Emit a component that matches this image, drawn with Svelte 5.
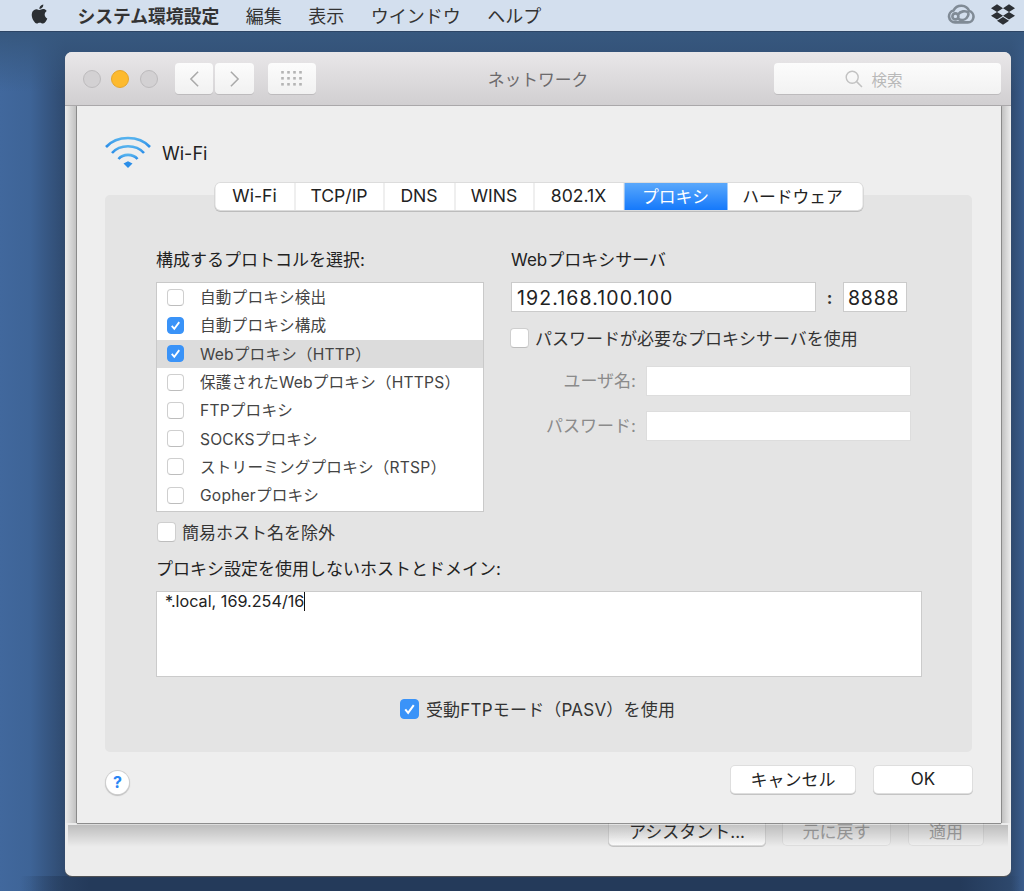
<script>
  const menus = ['編集', '表示', 'ウインドウ', 'ヘルプ'];
  const tabs = [
    { name: 'Wi-Fi', w: 80, latin: true },
    { name: 'TCP/IP', w: 89, latin: true },
    { name: 'DNS', w: 71, latin: true },
    { name: 'WINS', w: 79, latin: true },
    { name: '802.1X', w: 90, latin: true },
    { name: 'プロキシ', w: 103, active: true },
    { name: 'ハードウェア', w: 135 }
  ];
  const protocols = [
    { name: '自動プロキシ検出', on: false },
    { name: '自動プロキシ構成', on: true },
    { name: 'Webプロキシ\uFF08HTTP\uFF09', on: true, selected: true },
    { name: '保護されたWebプロキシ\uFF08HTTPS\uFF09', on: false },
    { name: 'FTPプロキシ', on: false },
    { name: 'SOCKSプロキシ', on: false },
    { name: 'ストリーミングプロキシ\uFF08RTSP\uFF09', on: false },
    { name: 'Gopherプロキシ', on: false }
  ];
  const pasvLabel = '受動FTPモード\uFF08PASV\uFF09を使用';
</script>

{#snippet box(on, cls)}
  <span class="box {cls} {on ? 'on' : ''}">
    {#if on}
      <svg viewBox="0 0 20 20" class="tick"><path d="M5 10.5l3.4 4L15 5.5" fill="none" stroke="#fff" stroke-width="2.4"/></svg>
    {/if}
  </span>
{/snippet}

<div class="desktop">
  <header class="menubar">
    <svg class="apple" viewBox="0 0 24 24"><path fill="#2b2f33" d="M12.152 6.896c-.948 0-2.415-1.078-3.96-1.04-2.04.027-3.91 1.183-4.961 3.014-2.117 3.675-.546 9.103 1.519 12.09 1.013 1.454 2.208 3.09 3.792 3.039 1.52-.065 2.09-.987 3.935-.987 1.831 0 2.35.987 3.96.948 1.637-.026 2.676-1.48 3.676-2.948 1.156-1.688 1.636-3.325 1.662-3.415-.039-.013-3.182-1.221-3.22-4.857-.026-3.04 2.48-4.494 2.597-4.559-1.429-2.09-3.623-2.324-4.39-2.376-2-.156-3.675 1.09-4.61 1.09zM15.53 3.83c.843-1.012 1.4-2.427 1.245-3.83-1.207.052-2.662.805-3.532 1.818-.78.896-1.454 2.338-1.273 3.714 1.338.104 2.715-.688 3.559-1.701"/></svg>
    <strong class="appname">システム環境設定</strong>
    {#each menus as m}<span class="menu">{m}</span>{/each}
    <span class="spacer"></span>
    <svg class="cc" viewBox="0 0 28 20" fill="none" stroke="#808b96" stroke-width="2.6">
      <path d="M8 18.4h12.8a5.8 5.8 0 0 0 1.4-11.4A8.6 8.6 0 0 0 6.6 6.4 6.1 6.1 0 0 0 8 18.4z"/>
      <circle cx="8.4" cy="12.4" r="3"/>
      <path d="M11 10.6c2-3.4 8-4.8 10.6-1.4M11 14.6c3 2 6.6 1.6 8.6-.6 1.4-1.6 2-3.4 2-4.8"/>
    </svg>
    <svg class="dropbox" viewBox="0 0 24 24"><path fill="#2c3035" d="M6 1.807L0 5.629l6 3.822 6.001-3.822L6 1.807zM18 1.807l-6 3.822 6 3.822 6-3.822-6-3.822zM0 13.274l6 3.822 6.001-3.822L6 9.452l-6 3.822zM18 9.452l-6 3.822 6 3.822 6-3.822-6-3.822zM6 18.371l6.001 3.822 6-3.822-6-3.822L6 18.371z"/></svg>
  </header>

  <section class="window">
    <div class="titlebar">
      <span class="light"></span>
      <span class="light yellow"></span>
      <span class="light"></span>
      <div class="navgroup">
        <span class="tbtn nav">
          <svg viewBox="0 0 12 20" class="chev"><path d="M10 2L2 10l8 8" fill="none" stroke="#a9a9a9" stroke-width="1.7"/></svg>
        </span>
        <span class="tbtn nav">
          <svg viewBox="0 0 12 20" class="chev"><path d="M2 2l8 8-8 8" fill="none" stroke="#a9a9a9" stroke-width="1.7"/></svg>
        </span>
      </div>
      <span class="tbtn gridbtn">
        <svg viewBox="0 0 21 15" class="dots">
          {#each [0, 1, 2] as r}
            {#each [0, 1, 2, 3] as c}
              <rect x={c * 6 + 0.2} y={r * 6} width="2.6" height="2.6" fill="#b4b4b4" />
            {/each}
          {/each}
        </svg>
      </span>
      <span class="wintitle">ネットワーク</span>
      <span class="search">
        <svg viewBox="0 0 18 18" class="glass"><circle cx="7.2" cy="7.2" r="6" fill="none" stroke="#c2c2c2" stroke-width="1.4"/><path d="M11.6 11.6l5.4 5.4" stroke="#c2c2c2" stroke-width="1.5"/></svg>
        <span>検索</span>
      </span>
    </div>
    <div class="winbody">
      <span class="wbtn primary">アシスタント...</span>
      <span class="wbtn revert">元に戻す</span>
      <span class="wbtn apply">適用</span>
    </div>

    <div class="sheet">
      <div class="sheethead">
        <svg class="wifi" viewBox="0 0 46 34" fill="none" stroke="url(#wf)" stroke-width="2.6">
          <defs>
            <linearGradient id="wf" x1="0" y1="0" x2="0" y2="1"><stop offset="0" stop-color="#55b2ee"/><stop offset="1" stop-color="#2a8de8"/></linearGradient>
          </defs>
          <path d="M1 12C12 0 34 0 45 12"/>
          <path d="M7 18C15 9 31 9 39 18"/>
          <path d="M13.5 24C18 18.5 28 18.5 32.5 24"/>
          <path d="M18.5 28.5l4.5-2.2 4.5 2.2-4.5 4.5z" fill="#2a8de8" stroke="none"/>
        </svg>
        <span class="wifiname">Wi-Fi</span>
      </div>

      <div class="panel">
        <nav class="tabs">
          {#each tabs as t}
            <span class="tab" class:active={t.active} class:latin={t.latin} style="width:{t.w}px">{t.name}</span>
          {/each}
        </nav>

        <div class="cols">
          <div class="left">
            <div class="label">構成するプロトコルを選択:</div>
            <ul class="list">
              {#each protocols as p}
                <li class:selected={p.selected}>
                  {@render box(p.on, 'small')}
                  <span class="rowtext">{p.name}</span>
                </li>
              {/each}
            </ul>
            <div class="checkrow exclude">
              {@render box(false, 'big')}
              <span>簡易ホスト名を除外</span>
            </div>
          </div>
          <div class="right">
            <div class="label">Webプロキシサーバ</div>
            <div class="hostrow">
              <span class="field host">192.168.100.100</span>
              <span class="colon">:</span>
              <span class="field port">8888</span>
            </div>
            <div class="checkrow pwcheck">
              {@render box(false, 'big')}
              <span>パスワードが必要なプロキシサーバを使用</span>
            </div>
            <div class="cred first">
              <span class="credlabel">ユーザ名:</span>
              <span class="field credfield"></span>
            </div>
            <div class="cred">
              <span class="credlabel">パスワード:</span>
              <span class="field credfield"></span>
            </div>
          </div>
        </div>

        <div class="label bypass">プロキシ設定を使用しないホストとドメイン:</div>
        <div class="textarea">*.local, 169.254/16<span class="caret"></span></div>
        <div class="checkrow pasv">
          {@render box(true, 'big')}
          <span>{pasvLabel}</span>
        </div>
      </div>

      <div class="foot">
        <span class="help">?</span>
        <span class="spacer"></span>
        <span class="fbtn cancel">キャンセル</span>
        <span class="fbtn ok">OK</span>
      </div>
    </div>
  </section>
</div>

<style>
  :global(body) {
    margin: 0;
  }
  .desktop {
    position: relative;
    width: 1024px;
    height: 891px;
    overflow: hidden;
    background:
      linear-gradient(90deg, rgba(36, 58, 90, 0) 20px, #243a5a 90px, #243a5a 960px, rgba(36, 58, 90, 0) 1020px) left bottom / 100% 15px no-repeat,
      linear-gradient(180deg, #37587f, rgba(55, 88, 127, 0)) left top 32px / 100% 60px no-repeat,
      linear-gradient(90deg, #41689d 0, #3e6497 30px, #2f4a6f 65px, #2f4a6f 1011px, #3a5c8c 1024px);
    font-family: Inter, "Noto Sans CJK JP", sans-serif;
    color: #222;
  }
  .menubar {
    display: flex;
    align-items: center;
    gap: 26.5px;
    height: 32px;
    box-sizing: border-box;
    padding: 0 9px 1px 30px;
    background: #d3dfee;
    border-bottom: 1px solid #2d4565;
    color: #333;
    font-size: 18px;
  }
  .apple {
    width: 19px;
    height: 22px;
    margin-right: 2px;
    margin-top: -3px;
  }
  .appname {
    font-weight: 700;
    font-size: 17.8px;
  }
  .spacer {
    flex: 1;
  }
  .cc {
    width: 28px;
    height: 20px;
    margin-right: -10px;
    margin-top: -2px;
  }
  .dropbox {
    width: 24px;
    height: 25px;
    margin-top: -1px;
  }
  .window {
    position: absolute;
    left: 65px;
    top: 52px;
    width: 946px;
    height: 824px;
    border-radius: 7px;
    background: #ececec;
    display: flex;
    flex-direction: column;
    box-shadow: 0 1px 1px #555;
  }
  .titlebar {
    display: flex;
    align-items: center;
    height: 54px;
    box-sizing: border-box;
    padding: 0 10px 0 18px;
    border-radius: 7px 7px 0 0;
    background: linear-gradient(#e9e7e9, #d1cfd1);
    border-bottom: 1px solid #aaa8aa;
    position: relative;
  }
  .light {
    width: 18px;
    height: 18px;
    box-sizing: border-box;
    border-radius: 50%;
    background: #d3d1d3;
    border: 1px solid #bdbbbd;
    margin-right: 10.3px;
    flex: none;
  }
  .light.yellow {
    background: #fdba2e;
    border-color: #e6a62a;
  }
  .navgroup {
    display: flex;
    gap: 2px;
    margin-left: 7px;
  }
  .tbtn {
    display: flex;
    align-items: center;
    justify-content: center;
    height: 31px;
    border-radius: 4px;
    background: linear-gradient(#fcfcfc, #f1f1f1);
    box-shadow: 0 1px 0 #bdbbbd;
  }
  .nav {
    width: 38.5px;
  }
  .chev {
    width: 11px;
    height: 18px;
  }
  .gridbtn {
    width: 48px;
    margin-left: 14px;
  }
  .dots {
    width: 21px;
    height: 15px;
  }
  .wintitle {
    position: absolute;
    left: 0;
    right: 0;
    padding-top: 1px;
    text-align: center;
    font-size: 16.8px;
    color: #6c6a6c;
    pointer-events: none;
  }
  .search {
    margin-left: auto;
    width: 227px;
    height: 31px;
    padding-right: 27px;
    box-sizing: border-box;
    display: flex;
    align-items: center;
    justify-content: center;
    gap: 8px;
    border-radius: 4px;
    background: linear-gradient(#fcfcfc, #f2f2f2);
    box-shadow: 0 1px 0 #bdbbbd;
    color: #b9b9b9;
    font-size: 15.5px;
  }
  .glass {
    width: 18px;
    height: 18px;
  }
  .winbody {
    flex: 1;
    display: flex;
    align-items: flex-end;
    padding: 0 28px 31px 0;
    justify-content: flex-end;
  }
  .wbtn {
    height: 27px;
    padding-bottom: 2px;
    display: flex;
    align-items: center;
    justify-content: center;
    border-radius: 4px;
    font-size: 17px;
    box-sizing: border-box;
  }
  .primary {
    width: 156px;
    margin-right: 18px;
    background: linear-gradient(#efefef, #fff);
    box-shadow: 0 0 0 1px #dcdcdc, 0 1px 0 1px #c4c4c4;
    color: #333;
  }
  .revert {
    width: 107px;
    margin-right: 19px;
    background: #f2f2f2;
    box-shadow: 0 0 0 1px #e0e0e0;
    color: #a8a8a8;
  }
  .apply {
    width: 74px;
    background: #f2f2f2;
    box-shadow: 0 0 0 1px #e0e0e0;
    color: #a8a8a8;
  }
  .sheet {
    position: absolute;
    left: 12px;
    top: 54px;
    width: 924px;
    height: 717px;
    background: #eeeeee;
    box-shadow: 0 1px 1px rgba(0, 0, 0, 0.4), -1px 0 0 #b8b8b8, 1px 0 0 #b8b8b8;
    display: flex;
    flex-direction: column;
  }
  .sheet::before {
    content: "";
    position: absolute;
    left: -12px;
    right: -10px;
    top: 0;
    bottom: -24px;
    pointer-events: none;
    background:
      linear-gradient(90deg, rgba(0, 0, 0, 0), rgba(0, 0, 0, 0.2)) left top / 12px calc(100% - 24px) no-repeat,
      linear-gradient(270deg, rgba(0, 0, 0, 0), rgba(0, 0, 0, 0.2)) right top / 10px calc(100% - 24px) no-repeat,
      linear-gradient(180deg, rgba(0, 0, 0, 0.2), rgba(0, 0, 0, 0)) center bottom / calc(100% - 6px) 22px no-repeat;
  }
  .sheethead {
    display: flex;
    align-items: center;
    gap: 11px;
    height: 76px;
    padding: 13px 0 0 28px;
    box-sizing: border-box;
    flex: none;
  }
  .wifi {
    width: 46px;
    height: 34px;
    margin-top: 3px;
  }
  .wifiname {
    font-size: 18px;
    margin-top: 6px;
  }
  .panel {
    margin: 13px 29px 0 28px;
    height: 557px;
    box-sizing: border-box;
    padding: 0 50px 0 51px;
    background: #e4e4e4;
    border-radius: 5px;
    flex: none;
  }
  .tabs {
    display: flex;
    width: fit-content;
    margin: -12px auto 0;
    position: relative;
    background: #fff;
    border-radius: 5px;
    box-shadow: 0 0 0 1px #dcdcdc, 0 1px 0 1px #bcbcbc;
    overflow: hidden;
    transform: translateX(-0.5px);
  }
  .tab {
    height: 27px;
    padding-bottom: 2px;
    display: flex;
    align-items: center;
    justify-content: center;
    font-size: 16.8px;
    color: #222;
    border-right: 1px solid #e0e0e0;
    box-sizing: border-box;
  }
  .tab.latin {
    font-size: 17.6px;
  }
  .tab:last-child {
    border-right: 0;
    padding-right: 4px;
  }
  .tab.active {
    background: linear-gradient(#5aa8fb, #1579fb);
    color: #fff;
    border-right: 0;
  }
  .cols {
    display: grid;
    grid-template-columns: 328px 400px;
    column-gap: 27px;
    margin-top: 40px;
  }
  .label {
    font-size: 17px;
    line-height: 20px;
    color: #222;
    white-space: nowrap;
  }
  .list {
    list-style: none;
    margin: 12px 0 0;
    padding: 1px;
    height: 230px;
    box-sizing: border-box;
    background: #fff;
    box-shadow: inset 0 0 0 1px #c9c9c9;
  }
  .list li {
    height: 28.3px;
    display: flex;
    align-items: center;
    gap: 16px;
    padding-left: 10px;
    font-size: 15.6px;
    color: #444;
    white-space: nowrap;
  }
  .rowtext {
    padding-bottom: 2px;
    letter-spacing: 0.2px;
  }
  .list li.selected {
    background: #dcdcdc;
  }
  .box {
    display: block;
    flex: none;
    box-sizing: border-box;
    border-radius: 4px;
    background: #fff;
    border: 1px solid #cfcfcf;
    border-bottom-color: #bdbdbd;
  }
  .box.on {
    background: #3a93f8;
    border-color: #3a93f8;
  }
  .box.small {
    width: 17px;
    height: 17px;
  }
  .box.big {
    width: 19px;
    height: 20px;
  }
  .tick {
    display: block;
    width: 100%;
    height: 100%;
  }
  .checkrow {
    display: flex;
    align-items: center;
    gap: 6px;
    font-size: 17px;
    color: #333;
    white-space: nowrap;
  }
  .exclude {
    margin-top: 7px;
    margin-left: 1px;
  }
  .hostrow {
    display: flex;
    align-items: center;
    margin-top: 12px;
  }
  .field {
    display: flex;
    align-items: center;
    box-sizing: border-box;
    height: 30px;
    background: #fff;
    border: 1px solid #cbcbcb;
    font-size: 19.5px;
    letter-spacing: 1.1px;
    color: #222;
  }
  .host {
    width: 305px;
    padding: 2px 0 0 5px;
  }
  .colon {
    width: 27px;
    padding-top: 2px;
    text-align: center;
    font-size: 17px;
    font-weight: 700;
    color: #333;
  }
  .port {
    width: 64px;
    padding: 2px 0 0 4px;
    letter-spacing: 0.8px;
  }
  .pwcheck {
    margin-top: 13px;
    margin-left: -1px;
  }
  .cred {
    display: flex;
    align-items: center;
    margin-top: 15px;
  }
  .cred.first {
    margin-top: 16px;
  }
  .credlabel {
    width: 125px;
    padding-bottom: 3px;
    text-align: right;
    font-size: 17px;
    color: #8b8b8b;
    white-space: nowrap;
  }
  .credfield {
    width: 265px;
    margin-left: 10px;
    border-color: #dddddd;
  }
  .bypass {
    margin-top: 15px;
  }
  .textarea {
    margin-top: 12px;
    width: 766px;
    height: 86px;
    box-sizing: border-box;
    padding: 0 8px;
    background: #fff;
    border: 1px solid #cbcbcb;
    font-size: 16.2px;
    line-height: 19px;
    color: #222;
  }
  .caret {
    display: inline-block;
    width: 1px;
    height: 19px;
    background: #111;
    vertical-align: -4px;
  }
  .pasv {
    justify-content: center;
    margin: 19px 3px 0 0;
    gap: 7px;
    letter-spacing: 0.2px;
  }
  .foot {
    display: flex;
    align-items: flex-start;
    padding: 14px 29px 0 29px;
  }
  .help {
    width: 23px;
    height: 23px;
    border-radius: 50%;
    background: #fff;
    box-shadow: 0 0 0 1px #d0d0d0, 0 1px 1px 1px #c0c0c0;
    color: #2a86f5;
    font-weight: 700;
    font-size: 16px;
    line-height: 23px;
    text-align: center;
    margin-top: 5px;
  }
  .fbtn {
    height: 27px;
    padding-bottom: 2px;
    box-sizing: border-box;
    display: flex;
    align-items: center;
    justify-content: center;
    border-radius: 4px;
    background: #fff;
    box-shadow: 0 0 0 1px #dedede, 0 1px 0 1px #c4c4c4;
    font-size: 17px;
    color: #222;
  }
  .cancel {
    width: 124px;
    margin-right: 19px;
  }
  .ok {
    width: 98px;
  }
</style>
